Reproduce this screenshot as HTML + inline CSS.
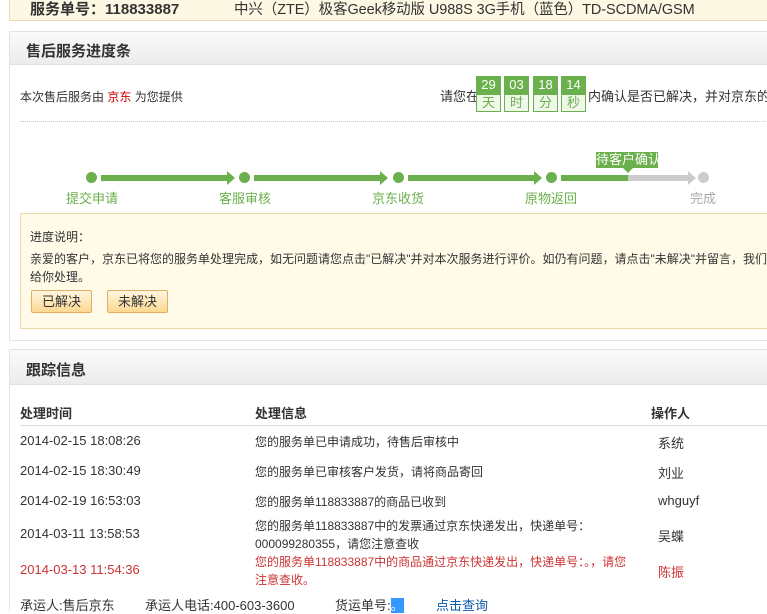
<!DOCTYPE html>
<html><head><meta charset="utf-8"><style>
body{margin:0;width:767px;height:611px;overflow:hidden;background:#fff;font-family:"Liberation Sans","Noto Sans CJK SC",sans-serif;font-size:12px;color:#333;position:relative}
.a{position:absolute;white-space:nowrap}
.hdr{position:absolute;left:9px;width:770px;height:34px;border:1px solid #e3e3e3;background:linear-gradient(#fafafa,#ececec);box-sizing:border-box}
.hdr span{position:absolute;left:16px;top:8px;font-size:15px;font-weight:bold;color:#333}
.dot{position:absolute;width:11px;height:11px;border-radius:50%;background:#6ab04c;top:172px}
.bar{position:absolute;height:6px;background:#6ab04c;top:175px}
.arr{position:absolute;top:171px;width:0;height:0;border-top:7px solid transparent;border-bottom:7px solid transparent;border-left:8px solid #6ab04c}
.lbl{position:absolute;top:188px;color:#6ab04c;font-size:13px}
.cd{position:absolute;top:76px;width:25px}
.cd b{display:block;height:18px;background:#6ab04c;color:#fff;font-weight:normal;text-align:center;line-height:18px;font-size:13px}
.cd i{display:block;height:16px;border:1px solid #6ab04c;background:#eef7e8;color:#6ab04c;font-style:normal;text-align:center;line-height:16px;font-size:13px;box-sizing:content-box;width:23px}
.btn{position:absolute;top:290px;width:61px;height:23px;border:1px solid #e0b060;border-radius:2px;background:linear-gradient(#fff6e0,#fcd890);text-align:center;line-height:22px;font-size:13px;box-sizing:border-box}
.r{position:absolute;font-size:13px}
</style></head><body>
<div class="a" style="left:9px;top:-1px;width:770px;height:22px;background:#fdf8e3;border:1px solid #eadbb0;box-sizing:border-box"></div>
<div class="a" style="left:30px;top:-2px;font-size:15px;font-weight:bold;color:#333">服务单号：118833887</div>
<div class="a" style="left:234px;top:-2px;font-size:14.5px;color:#333;letter-spacing:-0.1px">中兴（ZTE）极客Geek移动版 U988S 3G手机（蓝色）TD-SCDMA/GSM</div>

<div class="a" style="left:9px;top:31px;width:770px;height:310px;border:1px solid #e3e3e3;box-sizing:border-box"></div>
<div class="hdr" style="top:31px"><span>售后服务进度条</span></div>
<div class="a" style="left:20px;top:88px;font-size:12px">本次售后服务由 <span style="color:#c00">京东</span> 为您提供</div>
<div class="a" style="left:440px;top:86px;font-size:13px">请您在</div>
<div class="cd" style="left:476px"><b>29</b><i>天</i></div>
<div class="cd" style="left:504px"><b>03</b><i>时</i></div>
<div class="cd" style="left:533px"><b>18</b><i>分</i></div>
<div class="cd" style="left:561px"><b>14</b><i>秒</i></div>
<div class="a" style="left:588px;top:86px;font-size:13px">内确认是否已解决，并对京东的服务</div>
<div class="a" style="left:20px;top:121px;width:760px;border-top:1px dotted #ccc"></div>

<div class="dot" style="left:86px"></div><div class="bar" style="left:101px;width:126px"></div><div class="arr" style="left:227px"></div>
<div class="dot" style="left:239px"></div><div class="bar" style="left:254px;width:126px"></div><div class="arr" style="left:380px"></div>
<div class="dot" style="left:393px"></div><div class="bar" style="left:408px;width:126px"></div><div class="arr" style="left:534px"></div>
<div class="dot" style="left:546px"></div><div class="bar" style="left:561px;width:67px"></div>
<div class="bar" style="left:628px;width:60px;background:#ccc"></div><div class="arr" style="left:688px;border-left-color:#ccc"></div>
<div class="dot" style="left:698px;background:#ccc"></div>
<div class="a" style="left:596px;top:152px;width:62px;height:16px;background:#6ab04c;color:#fff;font-size:13px;line-height:16px;text-align:center">待客户确认</div>
<div class="a" style="left:623px;top:168px;border-left:5px solid transparent;border-right:5px solid transparent;border-top:5px solid #6ab04c"></div>
<div class="lbl" style="left:66px">提交申请</div>
<div class="lbl" style="left:219px">客服审核</div>
<div class="lbl" style="left:372px">京东收货</div>
<div class="lbl" style="left:525px">原物返回</div>
<div class="lbl" style="left:690px;color:#aaa">完成</div>

<div class="a" style="left:20px;top:213px;width:760px;height:116px;background:#fffbe8;border:1px solid #e8d9a8;box-sizing:border-box"></div>
<div class="a" style="left:30px;top:228px">进度说明：</div>
<div class="a" style="left:30px;top:250px">亲爱的客户，京东已将您的服务单处理完成，如无问题请您点击"已解决"并对本次服务进行评价。如仍有问题，请点击"未解决"并留言，我们</div>
<div class="a" style="left:30px;top:268px">给你处理。</div>
<div class="btn" style="left:31px">已解决</div>
<div class="btn" style="left:107px">未解决</div>

<div class="hdr" style="top:349px;height:36px"><span style="top:9px">跟踪信息</span></div>
<div class="a" style="left:9px;top:384px;width:1px;height:227px;background:#e3e3e3"></div>
<div class="r" style="left:20px;top:403px;font-weight:bold">处理时间</div>
<div class="r" style="left:255px;top:403px;font-weight:bold">处理信息</div>
<div class="r" style="left:651px;top:403px;font-weight:bold">操作人</div>
<div class="a" style="left:20px;top:425px;width:760px;border-top:1px solid #ddd"></div>

<div class="r" style="left:20px;top:433px">2014-02-15 18:08:26</div>
<div class="r" style="left:255px;top:433px;font-size:12px">您的服务单已申请成功，待售后审核中</div>
<div class="r" style="left:658px;top:433px">系统</div>
<div class="r" style="left:20px;top:463px">2014-02-15 18:30:49</div>
<div class="r" style="left:255px;top:463px;font-size:12px">您的服务单已审核客户发货，请将商品寄回</div>
<div class="r" style="left:658px;top:463px">刘业</div>
<div class="r" style="left:20px;top:493px">2014-02-19 16:53:03</div>
<div class="r" style="left:255px;top:493px;font-size:12px">您的服务单118833887的商品已收到</div>
<div class="r" style="left:658px;top:493px">whguyf</div>
<div class="r" style="left:20px;top:526px">2014-03-11 13:58:53</div>
<div class="r" style="left:255px;top:517px;font-size:12px;line-height:18px">您的服务单118833887中的发票通过京东快递发出，快递单号：<br>000099280355，请您注意查收</div>
<div class="r" style="left:658px;top:526px">吴蝶</div>
<div class="r" style="left:20px;top:562px;color:#c33">2014-03-13 11:54:36</div>
<div class="r" style="left:255px;top:553px;font-size:12px;line-height:18px;color:#c33">您的服务单118833887中的商品通过京东快递发出，快递单号：。，请您<br>注意查收。</div>
<div class="r" style="left:658px;top:562px;color:#c33">陈振</div>

<div class="r" style="left:20px;top:595px">承运人:售后京东</div>
<div class="r" style="left:145px;top:595px">承运人电话:400-603-3600</div>
<div class="r" style="left:335px;top:595px">货运单号:<span style="background:#39f;color:#fff">。</span></div>
<div class="r" style="left:436px;top:595px;color:#0b5aa8">点击查询</div>
</body></html>
